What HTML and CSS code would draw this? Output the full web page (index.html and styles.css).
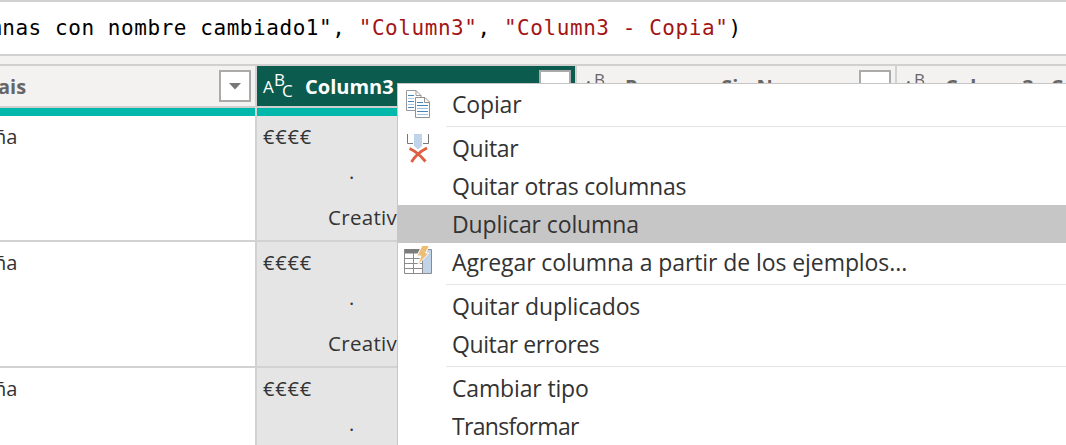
FILE: index.html
```html
<!DOCTYPE html>
<html lang="es">
<head>
<meta charset="utf-8">
<title>Editor de consultas</title>
<link rel="stylesheet" href="styles.css">
</head>
<body>
<div class="formula"><div class="code">mnas con nombre cambiado1", <span class="str">"Column3"</span>, <span class="str">"Column3 - Copia"</span>)</div></div>
<div class="gap"></div>
<div class="grid">
  <div class="col col-pais">
    <div class="head"><span class="title">ais</span><span class="filter"><svg width="12" height="7"><path d="M0 0H12L6 6.5Z" fill="#777"/></svg></span></div>
    <div class="quality"></div>
    <div class="cell">ña</div>
    <div class="cell">ña</div>
    <div class="cell">ña</div>
  </div>
  <div class="col selected">
    <div class="head"><span class="abc"><i class="a">A</i><i class="b">B</i><i class="c">C</i></span><span class="title">Column3</span><span class="filter"></span></div>
    <div class="quality"></div>
    <div class="cell"><p class="euro">€€€€</p><p class="dot">.</p><p class="name">Creativ</p></div>
    <div class="cell"><p class="euro">€€€€</p><p class="dot">.</p><p class="name">Creativ</p></div>
    <div class="cell"><p class="euro">€€€€</p><p class="dot">.</p></div>
  </div>
  <div class="col">
    <div class="head"><span class="abc"><i class="a">A</i><i class="b">B</i><i class="c">C</i></span><span class="title">Personas Sin Nom</span><span class="filter"></span></div>
  </div>
  <div class="col last">
    <div class="head"><span class="abc"><i class="a">A</i><i class="b">B</i><i class="c">C</i></span><span class="title">Column3 - Copia</span></div>
  </div>
</div>
<div class="menu">
  <div class="item"><span class="icon"><svg width="26" height="30" viewBox="0 0 26 30">
    <path d="M1.500 1.500H11L16 6.500V21.500H1.500Z" fill="#fff" stroke="#999"/><path d="M11 1.500V6.500H16" fill="none" stroke="#999"/>
    <path d="M3 6.500H9M3 12.500H9M3 18.500H9" stroke="#4587bd"/><path d="M3 9.500H9M3 15.500H9" stroke="#a9c9e5"/>
    <path d="M10.500 8.500H20L24.500 13V28.500H10.500Z" fill="#fff" stroke="#909090"/><path d="M19.500 8.500V13.500H24.500" fill="none" stroke="#909090"/>
    <path d="M12 13.500H18M12 16.500H23M12 22.500H23" stroke="#4587bd"/><path d="M12 19.500H23M12 25.500H23" stroke="#9bc2e2"/>
  </svg></span><span class="t-copy">Copiar</span></div>
  <div class="sep"></div>
  <div class="item"><span class="icon"><svg width="26" height="30" viewBox="0 0 26 30">
    <path d="M2.500 1V10.500H8M23.500 1V10.500H18" fill="none" stroke="#777"/>
    <path d="M9 1H17V13L13 16.500L9 13Z" fill="#c1d3e9"/>
    <path d="M4.500 15.500C10 18 16 23 20.500 28.500M22 15C14 19 10 23 6.500 29" fill="none" stroke="#dc6041" stroke-width="2.900"/>
  </svg></span><span class="t-remove">Quitar</span></div>
  <div class="item"><span class="icon"></span><span class="t-others">Quitar otras columnas</span></div>
  <div class="item active"><span class="icon"></span><span class="t-duplicate">Duplicar columna</span></div>
  <div class="item"><span class="icon"><svg class="table-icon" width="30" height="32" viewBox="0 -2 30 32">
    <path d="M1 2H29V26H1Z" fill="#fff"/><path d="M1 2H18V6.500H1Z" fill="#7c7c7c"/><path d="M19 2H28V26H19Z" fill="#c1d3e9"/>
    <path d="M1.500 2V26.500H28.500V2.500H19M1 11.500H19M1 16.500H19M1 21.500H19M10.500 6V26M19.500 6V26" fill="none" stroke="#8b8b8b"/>
    <path d="M19 -1.500H26.500L22.500 6H26L14.500 18.500L18 9H14Z" fill="#ebbd75" stroke="#fff" stroke-width="1"/>
  </svg></span><span class="t-examples">Agregar columna a partir de los ejemplos...</span></div>
  <div class="sep"></div>
  <div class="item"><span class="icon"></span><span class="t-dupes">Quitar duplicados</span></div>
  <div class="item"><span class="icon"></span><span class="t-errors">Quitar errores</span></div>
  <div class="sep"></div>
  <div class="item"><span class="icon"></span><span class="t-type">Cambiar tipo</span></div>
  <div class="item"><span class="icon"></span><span class="t-transform">Transformar</span></div>
</div>
</body>
</html>
```
FILE: styles.css
```css
* { box-sizing: border-box; }
body { margin: 0; width: 1066px; height: 445px; overflow: hidden; position: relative; background: #fff; color: #333; font-family: "Open Sans", "Noto Sans", sans-serif; }
p { margin: 0; }
i { font-style: normal; }
.formula { height: 56px; border-top: 2px solid #d0d0d0; border-bottom: 2px solid #d0d0d0; overflow: hidden; }
.code { margin-left: -11px; white-space: pre; font: 21px/53px "DejaVu Sans Mono", monospace; letter-spacing: 0.56px; color: #000; }
.str { color: #a31515; }
.gap { height: 10px; background: #f3f2f1; border-bottom: 2px solid #d0d0d0; }
.grid { display: flex; height: 379px; overflow: hidden; }
.col { flex: none; width: 320px; border-right: 2px solid #d2d2d2; }
.col-pais { width: 257px; }
.last { width: 169px; border-right: 0; }
.head { height: 42px; background: #f3f2f1; border-bottom: 2px solid #d0d0d0; display: flex; align-items: center; color: #666; padding: 0 4px 0 6px; white-space: nowrap; overflow: hidden; }
.last .head { padding-right: 0; }
.col-pais .head { padding-left: 0; }
.col-pais .title { text-indent: -2px; }
.title { flex: 1; font-size: 20px; line-height: 40px; padding-top: 2px; font-weight: 700; overflow: hidden; }
.filter { width: 32px; height: 32px; border: 2px solid #aaa; background: #fff; display: flex; align-items: center; justify-content: center; }
.abc { width: 42px; height: 30px; display: flex; font-size: 17px; line-height: 17px; }
.abc i { width: 11px; }
.abc .b { width: 8px; padding-top: 0; }
.a { padding-top: 7px; }
.c { padding-top: 11px; }
.quality { height: 8px; background: #01b8aa; }
.cell { height: 126px; padding-top: 1px; border-bottom: 2px solid #d2d2d2; font-size: 20px; line-height: 40px; overflow: hidden; }
.col-pais .cell { text-indent: -6px; }
.selected .head { background: #0b5c4f; color: #fff; }
.selected .cell { background: #e5e5e5; }
.euro { padding-left: 6px; letter-spacing: 0.8px; }
.dot { padding-left: 92px; height: 40px; line-height: 30px; }
.name { padding-left: 71px; font-size: 20.5px; letter-spacing: 0.3px; }
.menu { position: absolute; left: 397px; top: 83px; width: 669px; height: 362px; background: #fff; border: 1px solid #c6c6c6; border-width: 1px 0 0 1px; padding-top: 1px; }
.item { height: 38px; display: flex; align-items: center; font-size: 23px; line-height: 38px; white-space: nowrap; }
.active { background: #c6c6c6; }
.icon { width: 54px; padding-left: 7px; height: 30px; flex: none; }
.icon svg { display: block; }
.icon .table-icon { margin: -2px 0 0 -2px; }
.t-copy { letter-spacing: -0.15px; }
.t-remove { letter-spacing: -0.3px; }
.t-others { letter-spacing: -0.24px; }
.t-duplicate { letter-spacing: -0.1px; }
.t-examples { letter-spacing: -0.08px; }
.t-dupes { letter-spacing: -0.15px; }
.t-errors { letter-spacing: -0.4px; }
.t-type { letter-spacing: -0.15px; }
.t-transform { letter-spacing: -0.7px; }
.sep { height: 6px; margin-left: 48px; background: linear-gradient(#e5e5e5, #e5e5e5) 0 3px / 100% 1px no-repeat; }
```
